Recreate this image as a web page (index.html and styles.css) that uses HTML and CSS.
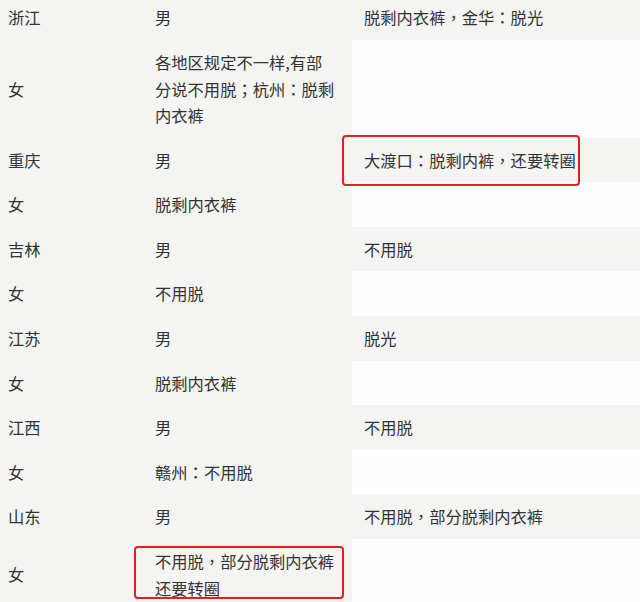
FILE: index.html
```html
<!DOCTYPE html>
<html lang="zh-CN">
<head>
<meta charset="utf-8">
<title>各地规定</title>
<link rel="stylesheet" href="styles.css">
</head>
<body>
<table class="rules">
  <colgroup>
    <col class="c-region">
    <col class="c-sex">
    <col class="c-note">
  </colgroup>
  <tbody>
    <tr><td>浙江</td><td>男</td><td>脱剩内衣裤<span class="p" lang="zh-TW">，</span>金华<span class="p" lang="zh-TW">：</span>脱光</td></tr>
    <tr class="f"><td>女</td><td>各地区规定不一样,有部分说不用脱<span class="p" lang="zh-TW">；</span>杭州<span class="p" lang="zh-TW">：</span>脱剩内衣裤</td><td class="blank"></td></tr>
    <tr><td>重庆</td><td>男</td><td class="mark"><span class="box box-a"></span>大渡口<span class="p" lang="zh-TW">：</span>脱剩内裤<span class="p" lang="zh-TW">，</span>还要转圈</td></tr>
    <tr class="f"><td>女</td><td>脱剩内衣裤</td><td class="blank"></td></tr>
    <tr><td>吉林</td><td>男</td><td>不用脱</td></tr>
    <tr class="f"><td>女</td><td>不用脱</td><td class="blank"></td></tr>
    <tr><td>江苏</td><td>男</td><td>脱光</td></tr>
    <tr class="f"><td>女</td><td>脱剩内衣裤</td><td class="blank"></td></tr>
    <tr><td>江西</td><td>男</td><td>不用脱</td></tr>
    <tr class="f"><td>女</td><td>赣州<span class="p" lang="zh-TW">：</span>不用脱</td><td class="blank"></td></tr>
    <tr><td>山东</td><td>男</td><td>不用脱<span class="p" lang="zh-TW">，</span>部分脱剩内衣裤</td></tr>
    <tr class="f"><td>女</td><td class="mark"><span class="box box-b"></span>不用脱<span class="p" lang="zh-TW">，</span>部分脱剩内衣裤还要转圈</td><td class="blank"></td></tr>
  </tbody>
</table>
</body>
</html>
```

FILE: styles.css
```css
html, body {
  margin: 0;
  padding: 0;
  background: #f4f4f2;
}
body {
  width: 640px;
  height: 602px;
  overflow: hidden;
  font-family: "Noto Sans CJK SC", "Microsoft YaHei", sans-serif;
  font-size: 16.3px;
  color: #333;
}
.rules {
  border-collapse: collapse;
  table-layout: fixed;
  width: 640px;
  margin-top: -4.7px;
}
.c-region { width: 147px; }
.c-sex { width: 205px; }
.c-note { width: 288px; }
.rules td {
  padding: 9px 8px;
  line-height: 26.6px;
  vertical-align: middle;
  text-align: left;
}
.rules td:nth-child(2) {
  padding-right: 17px;
}
.rules td:nth-child(3) {
  padding-left: 12px;
}
.rules td.blank {
  background: #fefefe;
}
.p {
  font-family: "Noto Sans CJK TC", "Noto Sans CJK SC", sans-serif;
}
.mark {
  position: relative;
}
.box {
  position: absolute;
  border: 2.5px solid #e0221f;
  border-radius: 4px;
  box-sizing: border-box;
  pointer-events: none;
}
.box-a {
  left: -10px;
  top: -2.7px;
  width: 238px;
  height: 51px;
}
.box-b {
  left: -13px;
  top: 7.3px;
  width: 210px;
  height: 53px;
}
```
